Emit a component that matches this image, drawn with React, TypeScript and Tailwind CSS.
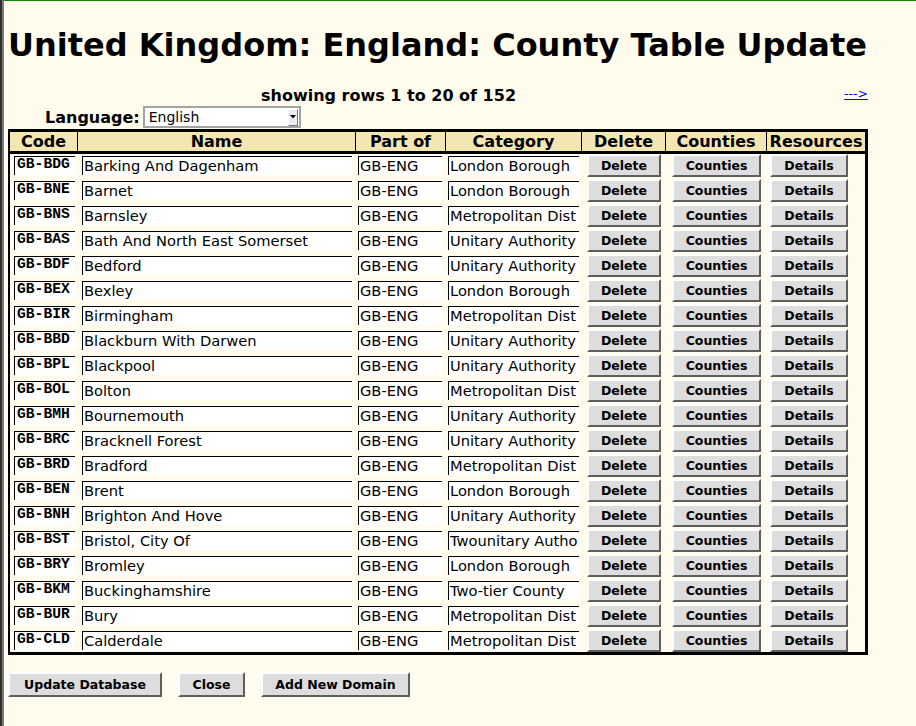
import React from 'react'

const rows: [string, string, string][] = [
  ['GB-BDG', 'Barking And Dagenham', 'London Borough'],
  ['GB-BNE', 'Barnet', 'London Borough'],
  ['GB-BNS', 'Barnsley', 'Metropolitan Dist'],
  ['GB-BAS', 'Bath And North East Somerset', 'Unitary Authority'],
  ['GB-BDF', 'Bedford', 'Unitary Authority'],
  ['GB-BEX', 'Bexley', 'London Borough'],
  ['GB-BIR', 'Birmingham', 'Metropolitan Dist'],
  ['GB-BBD', 'Blackburn With Darwen', 'Unitary Authority'],
  ['GB-BPL', 'Blackpool', 'Unitary Authority'],
  ['GB-BOL', 'Bolton', 'Metropolitan Dist'],
  ['GB-BMH', 'Bournemouth', 'Unitary Authority'],
  ['GB-BRC', 'Bracknell Forest', 'Unitary Authority'],
  ['GB-BRD', 'Bradford', 'Metropolitan Dist'],
  ['GB-BEN', 'Brent', 'London Borough'],
  ['GB-BNH', 'Brighton And Hove', 'Unitary Authority'],
  ['GB-BST', 'Bristol, City Of', 'Twounitary Autho'],
  ['GB-BRY', 'Bromley', 'London Borough'],
  ['GB-BKM', 'Buckinghamshire', 'Two-tier County'],
  ['GB-BUR', 'Bury', 'Metropolitan Dist'],
  ['GB-CLD', 'Calderdale', 'Metropolitan Dist'],
]

const cols = 'grid grid-cols-[67px_278px_90px_136px_84px_101px_99px]'

function Btn({ label, className = '' }: { label: string; className?: string }) {
  return (
    <button
      className={
        'flex items-center justify-center pt-px bg-[#dddddd] border-2 border-t-white border-l-white border-r-[#5e5e5e] border-b-[#5e5e5e] font-bold text-[12.5px] text-black ' +
        className
      }
    >
      {label}
    </button>
  )
}

function Field({ value, className = '' }: { value: string; className?: string }) {
  return (
    <input
      readOnly
      value={value}
      className={
        'mt-[2px] h-[19px] bg-white border-t border-l border-black pl-px pb-px text-[14.67px] leading-[17px] text-black outline-none ' +
        className
      }
    />
  )
}

export default function App() {
  return (
    <div className="flex min-h-[726px] bg-[#fffcee] text-black leading-normal" style={{ fontFamily: '"DejaVu Sans", sans-serif' }}>
      {/* window edge */}
      <div className="w-[2px] bg-[#2e2e2e]" />
      <div className="w-[2px] bg-[#7c7c7c]" />

      <div className="flex-1 border-t border-[#0b870b] pl-1">
        <h1 className="mt-[26px] text-[32px] leading-[37px] font-bold whitespace-nowrap">
          United Kingdom: England: County Table Update
        </h1>

        <div className="w-[860px]">
          <div className="mt-[22px] flex h-[19px] items-start justify-between">
            <span className="ml-[253px] text-[16px] leading-[19px] font-bold">showing rows 1 to 20 of 152</span>
            <a href="#" className="text-[12.5px] leading-[15px] text-[#0000ee] underline">---&gt;</a>
          </div>

          {/* Language */}
          <div className="mt-px flex h-[22px] items-center gap-[3px]">
            <span className="ml-[37px] text-[16px] leading-[19px] font-bold">Language:</span>
            <div className="flex h-[22px] w-[158px] items-center border-2 border-[#a3a3a3] bg-white">
              <span className="flex-1 pl-[4px] text-[14px] leading-[18px]">English</span>
              <div className="mr-[1px] flex h-[17px] w-[10px] items-center justify-center border border-t-white border-l-white border-r-[#777] border-b-[#777] bg-[#ececec]">
                <svg width="6" height="4" viewBox="0 0 6 4">
                  <path d="M0 0H6L3 3.5Z" fill="#000" />
                </svg>
              </div>
            </div>
          </div>

          {/* Table */}
          <div className="mt-px border-l-2 border-t-[3px] border-r-[3px] border-b-[3px] border-black">
            <div className={cols + ' h-[22px] border-b-[3px] border-black bg-[#f4e6b2] text-[16px] leading-[19px] font-bold text-center'}>
              <div>Code</div>
              <div className="border-l border-black">Name</div>
              <div className="border-l border-black">Part of</div>
              <div className="border-l border-black">Category</div>
              <div className="border-l border-black">Delete</div>
              <div className="border-l border-black">Counties</div>
              <div className="border-l border-black whitespace-nowrap">Resources</div>
            </div>

            <div className="flex flex-col gap-[2px]">
              {rows.map(([code, name, cat]) => (
                <div key={code} className={cols + ' h-[23px]'}>
                  <div className="pl-[4px]">
                    <div
                      className="mt-[2px] h-[19px] w-[61px] bg-white border-t border-l border-black pl-[2px] text-[14.67px] leading-[14px] font-bold"
                      style={{ fontFamily: '"Liberation Mono", monospace' }}
                    >
                      {code}
                    </div>
                  </div>
                  <div className="pl-[5px]">
                    <Field value={name} className="w-[270px]" />
                  </div>
                  <div className="pl-[3px]">
                    <Field value="GB-ENG" className="w-[84px]" />
                  </div>
                  <div className="pl-[3px]">
                    <Field value={cat} className="w-[131px]" />
                  </div>
                  <div className="pl-[6px]">
                    <Btn label="Delete" className="h-[23px] w-[74px]" />
                  </div>
                  <div className="pl-[7px]">
                    <Btn label="Counties" className="h-[23px] w-[89px]" />
                  </div>
                  <div className="pl-[4px]">
                    <Btn label="Details" className="h-[23px] w-[78px]" />
                  </div>
                </div>
              ))}
            </div>
          </div>

          <div className="mt-[17px] flex gap-4">
            <Btn label="Update Database" className="h-[25px] w-[154px]" />
            <Btn label="Close" className="h-[25px] w-[67px]" />
            <Btn label="Add New Domain" className="h-[25px] w-[149px]" />
          </div>
        </div>
      </div>
    </div>
  )
}
